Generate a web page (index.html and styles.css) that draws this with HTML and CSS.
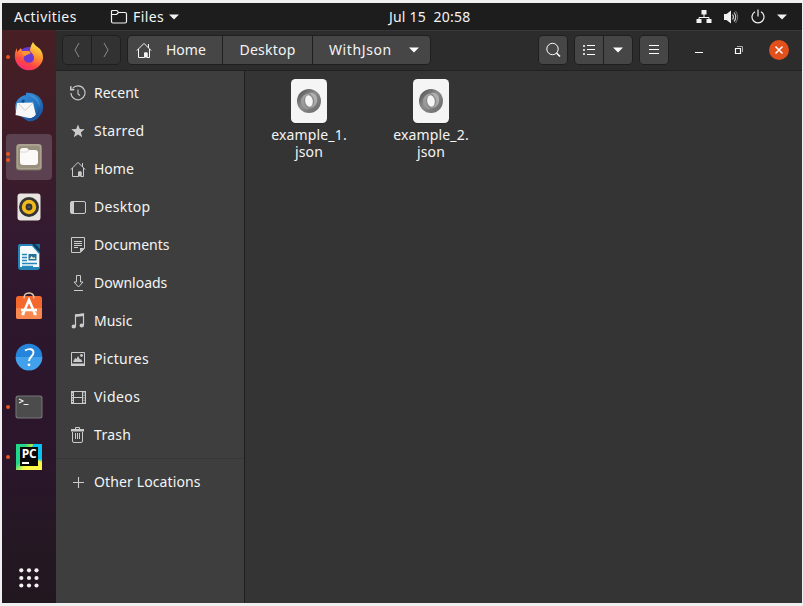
FILE: index.html
```html
<!DOCTYPE html>
<html lang="en">
<head>
<meta charset="utf-8">
<title>Files</title>
<link rel="stylesheet" href="styles.css">
</head>
<body>
<svg class="defs" aria-hidden="true">
  <defs>
    <linearGradient id="fx" x1=".8" y1="0" x2=".3" y2="1"><stop offset="0" stop-color="#fff04a"/><stop offset=".4" stop-color="#ff9a2e"/><stop offset=".75" stop-color="#ff4545"/><stop offset="1" stop-color="#f52c78"/></linearGradient>
    <linearGradient id="tb" x1="0" y1="0" x2="1" y2="1"><stop offset="0" stop-color="#3c93df"/><stop offset=".6" stop-color="#2270bd"/><stop offset="1" stop-color="#174b91"/></linearGradient>
    <linearGradient id="js" x1="0" y1="0" x2="1" y2="1"><stop offset="0" stop-color="#4a4a4a"/><stop offset=".45" stop-color="#8c8c8c"/><stop offset="1" stop-color="#666"/></linearGradient>
    <linearGradient id="js2" x1="0" y1="1" x2="1" y2="0"><stop offset="0" stop-color="#909090"/><stop offset="1" stop-color="#b8b8b8"/></linearGradient>
    <symbol id="home" viewBox="0 0 16 16"><path d="M.8 8.6 8 1.4l7.2 7.2M2.500 7v8.500h6V11H11v4.500h2.500V7M12.500 2v4" fill="none" stroke="currentColor"/><path d="M8.500 10.500h3v5h-3z" fill="currentColor"/></symbol>
    <symbol id="json" viewBox="0 0 38 46"><rect x="1" y="1.500" width="36" height="44" rx="4.500" fill="#222"/><rect x="1" y="1" width="36" height="44" rx="4.500" fill="#f5f5f5"/><circle cx="19" cy="23" r="12" fill="url(#js)"/><path d="M19 15c6-1 9 4 8 9-1 4-5 7-9 6 4-1 6-4 6-7s-2-6-5-8zM19 31c-6 1-9-4-8-9 1-4 5-7 9-6-4 1-6 4-6 7s2 6 5 8z" fill="url(#js2)"/><ellipse cx="19" cy="23" rx="3.800" ry="5.800" transform="rotate(-10 19 23)" fill="#f5f5f5"/></symbol>
  </defs>
</svg>

<div class="screen">
  <header class="topbar">
    <span class="label activities">Activities</span>
    <span class="appmenu">
      <svg width="18" height="16" viewBox="0 0 18 16"><path d="M1.500 12.500v-10q0-1 1-1h4.500l1.500 2h6.500q1.500 0 1.500 1.500v7.500q0 1.500-1.500 1.500h-12q-1.500 0-1.500-1.500zM1.500 5.500h5l2-2" fill="none" stroke="#f2f2f2" stroke-width="1.200"/></svg>
      <span class="label files">Files</span>
      <svg width="10" height="6" viewBox="0 0 10 6"><path d="M0 .5h10L5 5.500z" fill="#f2f2f2"/></svg>
    </span>
    <span class="label clock">Jul 15&nbsp; 20:58</span>
    <span class="tray">
      <svg width="16" height="16" viewBox="0 0 16 16"><path d="M8 4v5M3 11V8.500h10V11" fill="none" stroke="#f2f2f2"/><path d="M5.500 1h5v4.500h-5zM.5 10h5v4h-5zM10.500 10h5v4h-5z" fill="#f2f2f2"/></svg>
      <svg width="16" height="16" viewBox="0 0 16 16"><path d="M1 5h2.500L8 1.500v13L3.500 11H1z" fill="#f2f2f2"/><path d="M9.500 5.500q2 2.500 0 5M11 3.500q3.500 4.500 0 9" fill="none" stroke="#ccc" stroke-width="1.200"/><path d="M12.500 2q4.500 6 0 12" fill="none" stroke="#777"/></svg>
      <svg width="16" height="16" viewBox="0 0 16 16"><path d="M5 2.700a6 6 0 1 0 6 0M8 .5v7" fill="none" stroke="#f2f2f2" stroke-width="1.200"/></svg>
      <svg width="10" height="6" viewBox="0 0 10 6"><path d="M0 .5h10L5 5.500z" fill="#f2f2f2"/></svg>
    </span>
  </header>

  <div class="workspace">
    <nav class="dock">
      <div class="slot one"><svg width="30" height="30" viewBox="0 0 30 30"><circle cx="15" cy="16" r="11" fill="#6b39cf"/><path d="M19 0c1 3 5 5 7 7 4 5 4 12 0 16-5 7-17 7-22 0-4-5-4-12-1-17v4l4-4 1 3h6l2 2-4 2c-3 1-3 5 0 7 4 2 8 0 8-4 0-3-2-5-4-7 0-3 1-6 3-9z" fill="url(#fx)"/><path d="M9 9h6l2 2-4 2-3 1c-2-1-2-3-1-5z" fill="#ff9530"/></svg></div>
      <div class="slot"><svg width="30" height="30" viewBox="0 0 30 30"><path d="M12 1c2-1 8 0 12 3 5 4 7 12 3 18-3 6-9 8-13 7L2 21C-1 12 4 4 12 3z" fill="url(#tb)"/><path d="M14 2q11 1 12 13-3-8-9-10z" fill="#3b8fd2"/><path d="M3 11 19 10.500l3 13-5 3L1.500 23z" fill="#f7f7f7"/><path d="m5 12 6 6.500 8-7.500" fill="none" stroke="#ccc"/><path d="M17 26q7-2 8-11 3 9-8 14l-5-2z" fill="#20559f"/><path d="M7 9q3-3 4 0l-2 2z" fill="#164c83"/></svg></div>
      <div class="slot active two"><svg width="28" height="28" viewBox="0 0 28 28"><rect x="1" y="1.500" width="26" height="26" rx="3" fill="#79705f"/><rect x="1.500" y="1" width="25" height="25.500" rx="3" fill="#aaa18f"/><rect x="3" y="3" width="22" height="22" rx="3" fill="#988f7e"/><path d="M5 8q0-3 3-3h4l2 2h6q3 0 3 3v9q0 3-3 3H8q-3 0-3-3z" fill="#fbfaf8"/><path d="M5 9h7l2-2" stroke="#ddd8cf" fill="none"/></svg></div>
      <div class="slot"><svg width="28" height="28" viewBox="0 0 28 28"><rect x="2.500" y=".5" width="23" height="27" rx="3" fill="#e8e4df"/><circle cx="14" cy="14" r="10" fill="#343434"/><circle cx="14" cy="14" r="5.300" fill="none" stroke="#f3b91c" stroke-width="3.800"/><circle cx="14" cy="14" r="1.300" fill="#555"/></svg></div>
      <div class="slot"><svg width="28" height="28" viewBox="0 0 28 28"><path d="M5 1h13l7 8v15q0 3-3 3H6q-3 0-3-3V3q0-2 2-2z" fill="#2585b8"/><path d="M6 3h11l7 8v13H5V4z" fill="#f5fafc"/><path d="M17 1l8 9V1z" fill="#0c3b59"/><path d="M20 1h5v5z" fill="#17719f"/><path d="M7 11.500h5M7 14.500h5M7 17.500h5M7 20.500h15M7 23.500h11" stroke="#2689b9" stroke-width="1.400"/><rect x="13.500" y="11" width="8" height="6.500" fill="#20719c"/><path d="m14.500 16 2-3 2 2 1-1 1 2z" fill="#e9edcb"/></svg></div>
      <div class="slot"><svg class="raised" width="28" height="30" viewBox="0 0 28 30"><rect x="1" y="5" width="26" height="23" rx="2.500" fill="#f4682d"/><path d="M1 17h26v9q0 2-2 2H3q-2 0-2-2z" fill="#f98850"/><path d="M9 7.500q0-5.500 5-5.500t5 5.500" fill="none" stroke="#e6caac" stroke-width="1.400"/><path d="m8 23 6-14 6 14M6 19h16M6.500 23h3M18.500 23h3" fill="none" stroke="#fff" stroke-width="2.600"/></svg></div>
      <div class="slot"><svg width="28" height="28" viewBox="0 0 28 28"><circle cx="14" cy="14" r="13.300" fill="#2585dc"/><path d="M.7 14h26.600a13.300 13.300 0 0 1-26.600 0z" fill="#43a0eb"/><path d="M10 7.500C14 5 18.500 6 18.500 9.500c0 4-4.500 4-4.500 8.500" fill="none" stroke="#fff" stroke-width="1.900"/><circle cx="14" cy="21.800" r="1.400" fill="#fff"/></svg></div>
      <div class="slot one"><svg width="28" height="24" viewBox="0 0 28 24"><rect x=".5" y=".5" width="27" height="23" rx="2.500" fill="#777"/><rect x="1.500" y="1.500" width="25" height="21" rx="2" fill="#4c4c4c"/><path d="m4 4 4 2-4 2M8.500 9.500h5" fill="none" stroke="#eee" stroke-width="1.200"/></svg></div>
      <div class="slot one"><div class="pycharm"><span>PC</span></div></div>
      <div class="slot apps"><svg width="20" height="20" viewBox="0 0 20 20"><g fill="#f3f1f2"><circle cx="2.300" cy="2.300" r="2.100"/><circle cx="10" cy="2.300" r="2.100"/><circle cx="17.500" cy="2.300" r="2.100"/><circle cx="2.300" cy="10" r="2.100"/><circle cx="10" cy="10" r="2.100"/><circle cx="17.500" cy="10" r="2.100"/><circle cx="2.300" cy="17.500" r="2.100"/><circle cx="10" cy="17.500" r="2.100"/><circle cx="17.500" cy="17.500" r="2.100"/></g></svg></div>
    </nav>

    <main class="window">
      <div class="headerbar">
        <div class="group nav">
          <button class="btn"><svg width="16" height="16" viewBox="0 0 16 16"><path d="m10 1-4 7 4 7" fill="none" stroke="#8b8b8b"/></svg></button>
          <button class="btn"><svg width="16" height="16" viewBox="0 0 16 16"><path d="m6 1 4 7-4 7" fill="none" stroke="#8b8b8b"/></svg></button>
        </div>
        <div class="group path">
          <button class="btn crumb-home"><svg width="16" height="16"><use href="#home"/></svg><span class="label">Home</span></button>
          <button class="btn crumb-desktop"><span class="label">Desktop</span></button>
          <button class="btn crumb-current"><span class="label">WithJson</span><svg width="10" height="6" viewBox="0 0 10 6"><path d="M0 .5h10L5 5.500z" fill="#fff"/></svg></button>
        </div>
        <div class="group search"><button class="btn"><svg width="16" height="16" viewBox="0 0 16 16"><circle cx="7.500" cy="7" r="5.700" fill="none" stroke="#fff"/><path d="m11.500 11 3.500 3.500" stroke="#fff" stroke-width="1.600"/></svg></button></div>
        <div class="group view">
          <button class="btn"><svg width="14" height="12" viewBox="0 0 14 12"><path d="M1.500 1.500h1v1h-1zM1.500 5.500h1v1h-1zM1.500 9.500h1v1h-1z" fill="none" stroke="#fff"/><path d="M5 1.500h8M5 5.500h8M5 10.500h8" stroke="#fff"/></svg></button>
          <button class="btn"><svg width="10" height="6" viewBox="0 0 10 6"><path d="M0 .5h10L5 5.500z" fill="#fff"/></svg></button>
        </div>
        <div class="group menu"><button class="btn"><svg width="12" height="10" viewBox="0 0 12 10"><path d="M1 .5h10M1 4.500h10M1 8.500h10" stroke="#fff"/></svg></button></div>
        <div class="controls">
          <svg width="20" height="20" viewBox="0 0 20 20"><path d="M6 12.500h8" stroke="#fff"/></svg>
          <svg width="20" height="20" viewBox="0 0 20 20"><path d="M6.500 8.500h5v5h-5z" fill="none" stroke="#fff" stroke-width="1.200"/><path d="M8 6.500h5.500V12" fill="none" stroke="#aaa"/></svg>
          <svg width="20" height="20" viewBox="0 0 20 20"><circle cx="10" cy="10" r="10" fill="#e2501c"/><path d="m6.500 6.500 7 7m0-7-7 7" stroke="#fff" stroke-width="1.500"/></svg>
        </div>
      </div>

      <div class="body">
        <aside class="sidebar">
          <div class="row"><svg width="16" height="16" viewBox="0 0 16 16"><path d="M2.500 3.500A7 7 0 1 1 1 8M8 4.500V9l2 1.500" fill="none" stroke="currentColor" stroke-width="1.100"/><path d="M0 1.500 1.500 1v3H5L3.500 5.500H0z" fill="currentColor"/></svg><span class="label">Recent</span></div>
          <div class="row"><svg width="16" height="16" viewBox="0 0 16 16"><path d="m8 1.500 1.800 4.600 4.900.2-3.800 3.100 1.300 4.800L8 11.500l-4.200 2.700 1.300-4.800-3.800-3.100 4.900-.2z" fill="currentColor"/></svg><span class="label wide">Starred</span></div>
          <div class="row"><svg width="16" height="16"><use href="#home"/></svg><span class="label">Home</span></div>
          <div class="row"><svg width="16" height="16" viewBox="0 0 16 16"><rect x=".5" y="2.500" width="15" height="12" rx="1.500" fill="none" stroke="currentColor"/><path d="M1 2.500h3v12H1z" fill="currentColor"/></svg><span class="label wide">Desktop</span></div>
          <div class="row"><svg width="16" height="16" viewBox="0 0 16 16"><path d="M1.500.5h13v11l-4 4h-9zM4 4.500h8M4 6.500h8M4 8.500h8M4 10.500h4" fill="none" stroke="currentColor"/><path d="M10 11h4.500L10 15.500z" fill="currentColor"/></svg><span class="label">Documents</span></div>
          <div class="row"><svg width="16" height="16" viewBox="0 0 16 16"><path d="M6.500.5h4V7H13l-4.500 5L4 7h2.500zM4 15.500h9" fill="none" stroke="currentColor"/></svg><span class="label">Downloads</span></div>
          <div class="row"><svg width="16" height="16" viewBox="0 0 16 16"><path d="M5.500 13V2l8-1v11" fill="none" stroke="currentColor" stroke-width="1.200"/><path d="M5 1.500l9-1V3L5 4z" fill="currentColor"/><ellipse cx="3.800" cy="13.500" rx="2.200" ry="1.900" fill="currentColor"/><ellipse cx="11.800" cy="12.500" rx="2.200" ry="1.900" fill="currentColor"/></svg><span class="label">Music</span></div>
          <div class="row"><svg width="16" height="16" viewBox="0 0 16 16"><path d="M1.500 1.500h13v13h-13z" fill="none" stroke="currentColor"/><path d="M1 12.500h14V15H1zM3 11l2-4 1.500 1L8 5l2 3.500L11 8l1.500 3z" fill="currentColor"/><circle cx="11.500" cy="4.500" r="1.400" fill="currentColor"/></svg><span class="label wide">Pictures</span></div>
          <div class="row"><svg width="16" height="16" viewBox="0 0 16 16"><path d="M3.500 2.500h9v12h-9zM3.500 8.500h9M1.500 2v13M15.500 2v13M1 2.500h15M1 14.500h15" fill="none" stroke="currentColor"/><path d="M2.500 3v11M14 3v11" stroke="currentColor" stroke-dasharray="1.500 1"/></svg><span class="label wider">Videos</span></div>
          <div class="row"><svg width="16" height="16" viewBox="0 0 16 16"><path d="M2.500 5v9q0 1.500 1.500 1.500h7q1.500 0 1.500-1.500V5M5.500 6v6M7.500 6v6M9.500 6v6M5.500 2.500v-2h4v2" fill="none" stroke="currentColor"/><path d="M1 2h13v2.500H1z" fill="currentColor"/></svg><span class="label wide">Trash</span></div>
          <div class="divider"></div>
          <div class="row"><svg width="16" height="16" viewBox="0 0 16 16"><path d="M3 8.500h11M8.500 3v11" stroke="currentColor" stroke-width="1.100"/></svg><span class="label other">Other Locations</span></div>
        </aside>
        <section class="content">
          <figure class="file"><svg width="38" height="46"><use href="#json"/></svg><figcaption>example_1.<br>json</figcaption></figure>
          <figure class="file"><svg width="38" height="46"><use href="#json"/></svg><figcaption>example_2.<br>json</figcaption></figure>
        </section>
      </div>
    </main>
  </div>
</div>
</body>
</html>
```
FILE: styles.css
```css
* { box-sizing: border-box; }
body {
  margin: 0;
  padding: 3px 1px 3px 2px;
  height: 606px;
  overflow: hidden;
  background: #f0f0f0;
  color: #f4f4f4;
  font: 14px/17px "Noto Sans", "Open Sans", sans-serif;
}
svg { display: block; flex: none; }
.defs { position: absolute; width: 0; height: 0; }
.screen { width: 800px; height: 600px; display: flex; flex-direction: column; background: #1d1d1d; }
.topbar {
  height: 27px;
  display: grid;
  grid-template-columns: 96px 279px 1fr auto;
  align-items: center;
  padding: 0 15px 0 12px;
  white-space: nowrap;
}
.topbar .label { padding: 0; }
.activities { letter-spacing: .45px; }
.files { letter-spacing: .4px; }
.clock { letter-spacing: .2px; }
.appmenu { display: flex; align-items: center; gap: 5px; }
.tray { display: flex; align-items: center; gap: 11px; }
.workspace { flex: 1; display: flex; min-height: 0; }

.label { padding-bottom: 2px; }
.wide { letter-spacing: .3px; }
.wider { letter-spacing: .45px; }
.other { letter-spacing: .12px; }

.dock {
  width: 54px;
  padding-top: 2px;
  display: flex;
  flex-direction: column;
  align-items: center;
  background: linear-gradient(#471f24 0, #3d1c28 22%, #331a31 36%, #2d172c 50%, #2b152b 75%, #251824 88%, #21171f 100%);
}
.slot { position: relative; width: 46px; height: 46px; margin: 2px 0; display: flex; align-items: center; justify-content: center; border-radius: 4px; }
.slot.active { background: #5c4150; }
.slot.one::before, .slot.two::before {
  content: "";
  position: absolute;
  left: 0;
  top: 21px;
  width: 4px;
  height: 4px;
  border-radius: 50%;
  background: #e95420;
}
.slot.two::before { top: 18px; box-shadow: 0 6px #e95420; }
.slot.apps { margin-top: auto; }
.raised { margin-bottom: 3px; }
.pycharm {
  width: 26px;
  height: 26px;
  padding: 3px 4px 4px;
  background: conic-gradient(from 20deg, #07c3f2 0 80deg, #fcf84a 95deg 170deg, #e4f44f 190deg, #21d789 220deg 320deg, #b6e83d 355deg, #07c3f2);
}
.pycharm span { display: block; width: 18px; height: 19px; background: #080808; color: #fff; font: bold 12px/13px "Open Sans", sans-serif; text-align: center; letter-spacing: -.3px; }
.pycharm span::after { content: ""; display: block; width: 7px; height: 1.500px; margin: 2px 0 0 2px; background: #fff; }

.window { flex: 1; display: flex; flex-direction: column; background: #343434; }
.headerbar {
  height: 41px;
  flex: none;
  display: flex;
  align-items: center;
  padding: 0 13px 1px 6px;
  background: #2c2c2c;
  border-top: 1px solid #383838;
  border-bottom: 1px solid #222;
}
.group { display: flex; height: 30px; border: 1px solid #1f1f1f; border-radius: 5px; overflow: hidden; background: #1f1f1f; gap: 1px; }
.btn { width: 28px; height: 28px; margin: 0; padding: 0; border: 0; display: flex; align-items: center; justify-content: center; background: #464646; color: #f4f4f4; font: inherit; }
.nav .btn { background: #323232; }
.path { margin-left: 6px; }
.path .crumb-home { width: 94px; gap: 14px; justify-content: flex-start; padding-left: 8px; }
.path .crumb-desktop { width: 89px; letter-spacing: .25px; }
.path .crumb-current { width: 117px; justify-content: space-between; padding: 0 11px 0 16px; letter-spacing: .6px; }
.search { margin-left: auto; }
.view, .menu { margin-left: 6px; }
.controls { display: flex; gap: 20px; margin-left: 20px; }

.body { flex: 1; display: flex; min-height: 0; }
.sidebar { width: 189px; padding-top: 3px; background: #3e3e3e; border-right: 1px solid #202020; }
.row { height: 38px; padding-left: 14px; display: flex; align-items: center; gap: 8px; white-space: nowrap; }
.row svg { color: #cbcbcb; }
.divider { height: 1px; margin: 4px 0; background: #373737; }
.content { flex: 1; display: flex; padding: 7px 0 0 3px; }
.file { margin: 0; width: 122px; display: flex; flex-direction: column; align-items: center; text-align: center; }
.file figcaption { margin-top: 2px; letter-spacing: .15px; }
```
